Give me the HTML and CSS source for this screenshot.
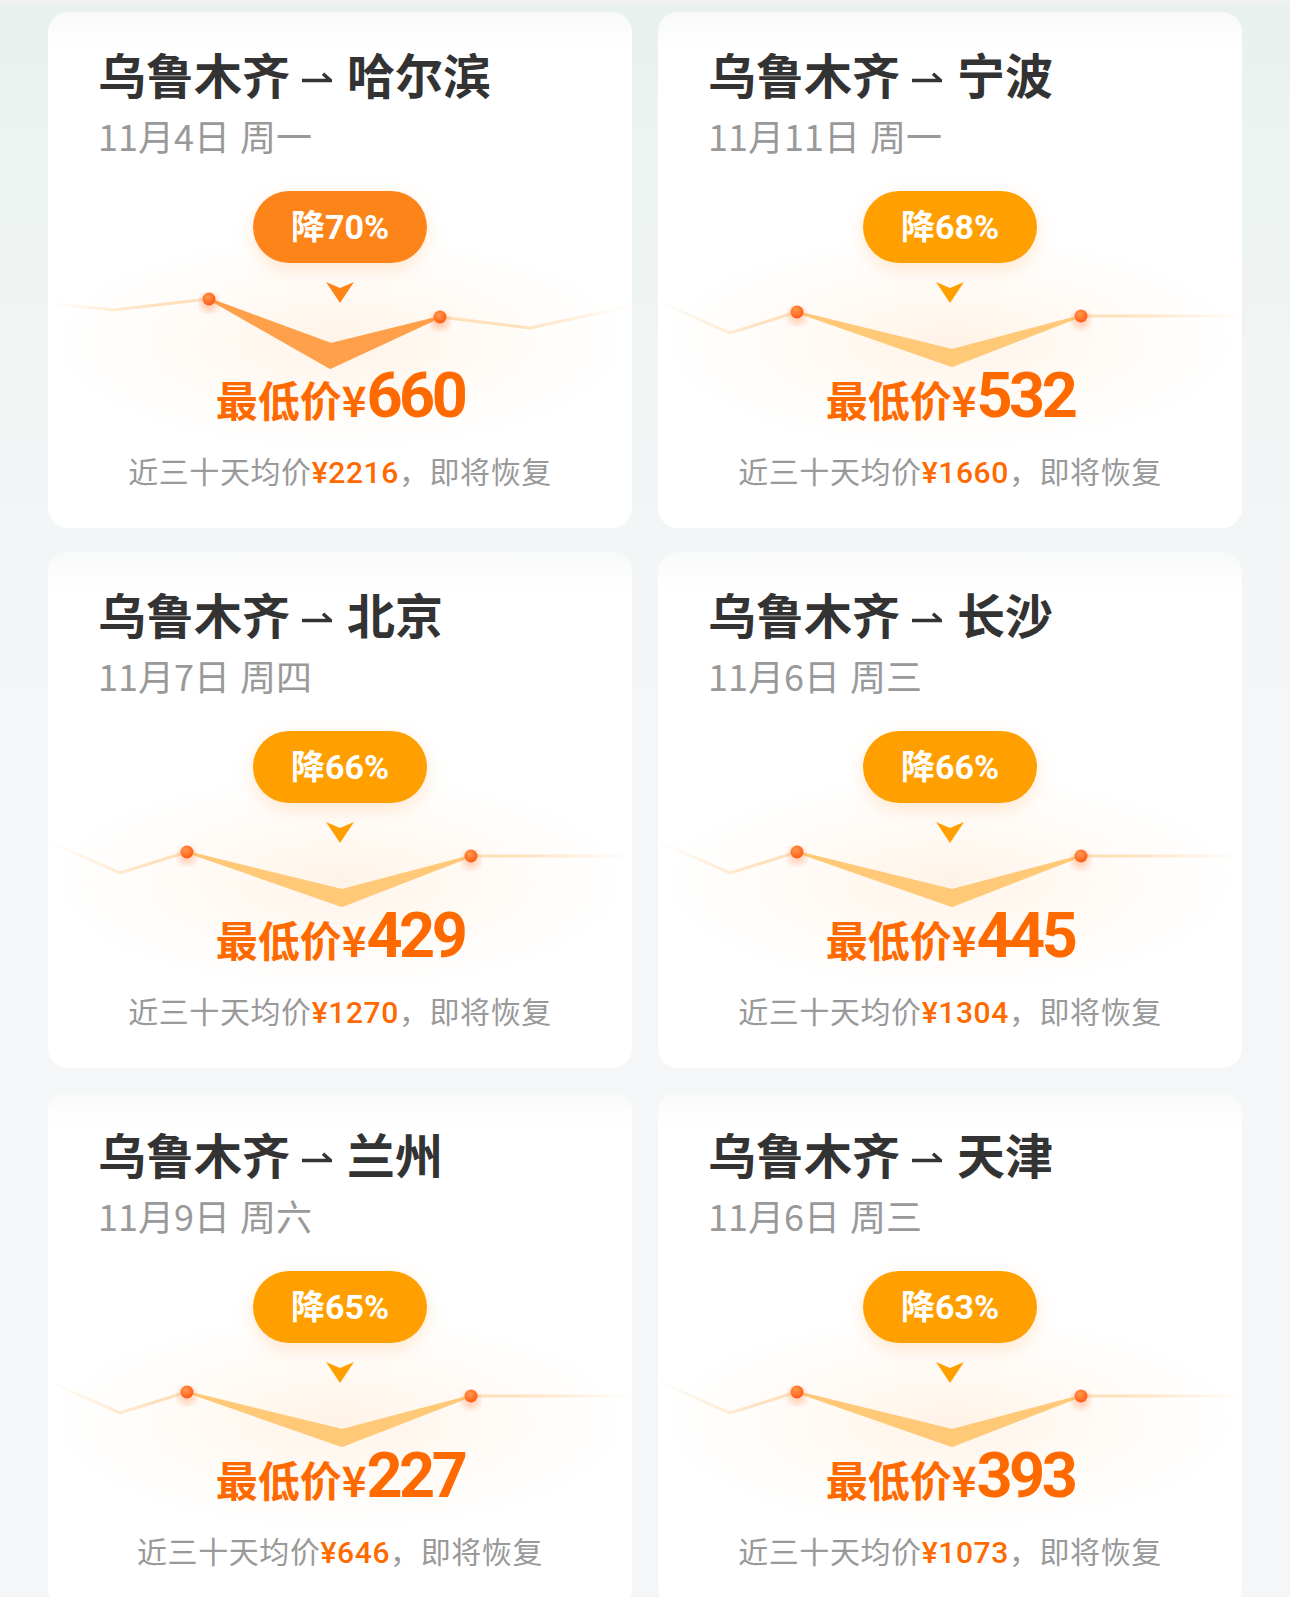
FILE: index.html
```html
<!DOCTYPE html>
<html lang="zh-CN">
<head>
    <meta charset="UTF-8">
    <meta name="viewport" content="width=device-width, initial-scale=1.0">
    <title>低价航线</title>
    <link rel="stylesheet" href="styles.css">
</head>
<body>
    <!-- shared drawing for the price trend behind each card -->
    <svg class="defs" width="0" height="0" aria-hidden="true">
        <defs>
            <radialGradient id="warm" cx="50%" cy="50%" r="50%">
                <stop offset="0" stop-color="#ffe9d2" stop-opacity="0.55"/>
                <stop offset="1" stop-color="#fff3e6" stop-opacity="0"/>
            </radialGradient>
            <linearGradient id="fade" gradientUnits="userSpaceOnUse" x1="0" y1="0" x2="584" y2="0">
                <stop offset="0" stop-color="#ffd9ad" stop-opacity="0"/>
                <stop offset="0.18" stop-color="#ffd9ad" stop-opacity="0.8"/>
                <stop offset="0.8" stop-color="#ffd9ad" stop-opacity="0.8"/>
                <stop offset="1" stop-color="#ffd9ad" stop-opacity="0"/>
            </linearGradient>
            <radialGradient id="dot" cx="40%" cy="35%" r="65%">
                <stop offset="0" stop-color="#ff9a50"/>
                <stop offset="1" stop-color="#ff5a14"/>
            </radialGradient>
            <filter id="soft"><feGaussianBlur stdDeviation="3"/></filter>

            <symbol id="chart-hot" viewBox="0 0 584 516">
                <rect x="0" y="220" width="584" height="220" fill="url(#warm)"/>
                <polyline points="0,291 65,298 161,287" fill="none" stroke="url(#fade)" stroke-width="3"/>
                <polyline points="392,305 482,316 584,294" fill="none" stroke="url(#fade)" stroke-width="3"/>
                <polygon points="161,287 282,356 392,305 283,332" fill="#ffa04a" stroke="#ffa04a" stroke-width="2" stroke-linejoin="round"/>
                <circle cx="161" cy="291" r="9" fill="#ff7a30" opacity="0.35" filter="url(#soft)"/>
                <circle cx="392" cy="309" r="9" fill="#ff7a30" opacity="0.35" filter="url(#soft)"/>
                <circle cx="161" cy="287" r="6.5" fill="url(#dot)"/>
                <circle cx="392" cy="305" r="6.5" fill="url(#dot)"/>
            </symbol>

            <symbol id="chart" viewBox="0 0 584 516">
                <rect x="0" y="220" width="584" height="220" fill="url(#warm)"/>
                <polyline points="0,289 72,321 139,300" fill="none" stroke="url(#fade)" stroke-width="3"/>
                <polyline points="423,304 584,304" fill="none" stroke="url(#fade)" stroke-width="3"/>
                <polygon points="139,300 294,354 423,304 294,338" fill="#ffc978" stroke="#ffc978" stroke-width="2" stroke-linejoin="round"/>
                <circle cx="139" cy="304" r="9" fill="#ff7a30" opacity="0.3" filter="url(#soft)"/>
                <circle cx="423" cy="308" r="9" fill="#ff7a30" opacity="0.3" filter="url(#soft)"/>
                <circle cx="139" cy="300" r="6.5" fill="url(#dot)"/>
                <circle cx="423" cy="304" r="6.5" fill="url(#dot)"/>
            </symbol>

            <symbol id="arrow" viewBox="0 0 30 12">
                <path d="M0 9.5H28.5L21 2.8" fill="none" stroke="#333" stroke-width="3.4"/>
            </symbol>
        </defs>
    </svg>

    <div class="list">
        <div class="card hot">
            <svg class="chart" viewBox="0 0 584 516"><use href="#chart-hot" width="584" height="516"/></svg>
            <div class="route">乌鲁木齐<svg class="arrow"><use href="#arrow"/></svg>哈尔滨</div>
            <div class="date">11月4日<span class="week">周一</span></div>
            <div class="trend">
                <div class="badge">降70%</div>
                <svg class="chevron" viewBox="0 0 28 21"><path d="M0 0L14 6L28 0L14 21Z"/></svg>
                <div class="price"><span class="label">最低价¥</span><span class="num">660</span></div>
            </div>
            <div class="avg">近三十天均价<em>¥2216</em>，即将恢复</div>
        </div>

        <div class="card">
            <svg class="chart" viewBox="0 0 584 516"><use href="#chart" width="584" height="516"/></svg>
            <div class="route">乌鲁木齐<svg class="arrow"><use href="#arrow"/></svg>宁波</div>
            <div class="date">11月11日<span class="week">周一</span></div>
            <div class="trend">
                <div class="badge">降68%</div>
                <svg class="chevron" viewBox="0 0 28 21"><path d="M0 0L14 6L28 0L14 21Z"/></svg>
                <div class="price"><span class="label">最低价¥</span><span class="num">532</span></div>
            </div>
            <div class="avg">近三十天均价<em>¥1660</em>，即将恢复</div>
        </div>

        <div class="card">
            <svg class="chart" viewBox="0 0 584 516"><use href="#chart" width="584" height="516"/></svg>
            <div class="route">乌鲁木齐<svg class="arrow"><use href="#arrow"/></svg>北京</div>
            <div class="date">11月7日<span class="week">周四</span></div>
            <div class="trend">
                <div class="badge">降66%</div>
                <svg class="chevron" viewBox="0 0 28 21"><path d="M0 0L14 6L28 0L14 21Z"/></svg>
                <div class="price"><span class="label">最低价¥</span><span class="num">429</span></div>
            </div>
            <div class="avg">近三十天均价<em>¥1270</em>，即将恢复</div>
        </div>

        <div class="card">
            <svg class="chart" viewBox="0 0 584 516"><use href="#chart" width="584" height="516"/></svg>
            <div class="route">乌鲁木齐<svg class="arrow"><use href="#arrow"/></svg>长沙</div>
            <div class="date">11月6日<span class="week">周三</span></div>
            <div class="trend">
                <div class="badge">降66%</div>
                <svg class="chevron" viewBox="0 0 28 21"><path d="M0 0L14 6L28 0L14 21Z"/></svg>
                <div class="price"><span class="label">最低价¥</span><span class="num">445</span></div>
            </div>
            <div class="avg">近三十天均价<em>¥1304</em>，即将恢复</div>
        </div>

        <div class="card">
            <svg class="chart" viewBox="0 0 584 516"><use href="#chart" width="584" height="516"/></svg>
            <div class="route">乌鲁木齐<svg class="arrow"><use href="#arrow"/></svg>兰州</div>
            <div class="date">11月9日<span class="week">周六</span></div>
            <div class="trend">
                <div class="badge">降65%</div>
                <svg class="chevron" viewBox="0 0 28 21"><path d="M0 0L14 6L28 0L14 21Z"/></svg>
                <div class="price"><span class="label">最低价¥</span><span class="num">227</span></div>
            </div>
            <div class="avg">近三十天均价<em>¥646</em>，即将恢复</div>
        </div>

        <div class="card">
            <svg class="chart" viewBox="0 0 584 516"><use href="#chart" width="584" height="516"/></svg>
            <div class="route">乌鲁木齐<svg class="arrow"><use href="#arrow"/></svg>天津</div>
            <div class="date">11月6日<span class="week">周三</span></div>
            <div class="trend">
                <div class="badge">降63%</div>
                <svg class="chevron" viewBox="0 0 28 21"><path d="M0 0L14 6L28 0L14 21Z"/></svg>
                <div class="price"><span class="label">最低价¥</span><span class="num">393</span></div>
            </div>
            <div class="avg">近三十天均价<em>¥1073</em>，即将恢复</div>
        </div>
    </div>
</body>
</html>
```

FILE: styles.css
```css
body { margin: 0; font-family: "Noto Sans CJK SC", sans-serif; background: linear-gradient(180deg, #f0f2f2 0, #f0f2f2 4px, #e8f1ee 5px, #eef4f2 200px, #f5f6f8 700px) no-repeat, #f5f6f8; }
.defs { position: absolute; width: 0; height: 0; }

.list { display: grid; grid-template-columns: 584px 584px; gap: 24px 26px; padding: 12px 48px 0; }

.card { position: relative; height: 516px; box-sizing: border-box; padding: 32px 0 0 50px; border-radius: 20px; background: linear-gradient(#f8faf9, #fff 40px); overflow: hidden; color: #ffa000; }
.card.hot { color: #fd8419; }
.chart { position: absolute; left: 0; top: 0; width: 584px; height: 516px; }

.route, .date, .trend, .avg { position: relative; }
.route { font-size: 48px; line-height: 58px; font-weight: 700; color: #333; white-space: nowrap; }
.arrow { width: 30px; height: 12px; margin: 0 15px 0 12px; vertical-align: 11px; }
.date { margin-top: 11px; font-size: 36px; line-height: 44px; color: #999; }
.week { margin-left: 10px; }

.trend { margin-left: -50px; display: flex; flex-direction: column; align-items: center; }
.badge { margin-top: 34px; width: 174px; height: 72px; border-radius: 36px; line-height: 72px; text-align: center; color: #fff; font-family: Roboto, "Noto Sans CJK SC", sans-serif; font-size: 34px; font-weight: 700; box-shadow: 0 6px 18px rgba(255, 150, 50, 0.22); }
.badge { background: #ffa000; }
.hot .badge { background: #fd8419; }
.chevron { margin-top: 19px; width: 28px; height: 21px; fill: currentColor; }
.price { margin-top: 61px; font-size: 42px; line-height: 1; font-weight: 700; color: #ff6a00; white-space: nowrap; }
.price .num { font-family: Roboto, sans-serif; font-size: 63px; letter-spacing: -3.5px; }

.avg { margin: 23px 0 0 -50px; text-align: center; font-size: 30px; line-height: 40px; letter-spacing: 0.6px; color: #999; white-space: nowrap; }
.avg em { font-style: normal; font-family: Roboto, sans-serif; font-weight: 500; color: #ff6a00; }
```
